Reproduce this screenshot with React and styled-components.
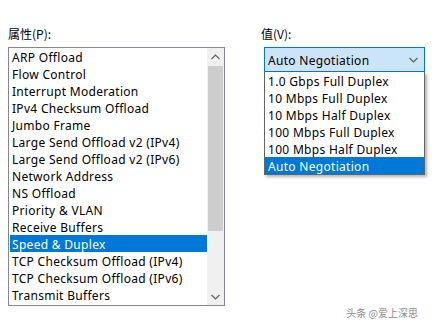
import React from 'react';
import styled, { createGlobalStyle } from 'styled-components';

const GlobalStyle = createGlobalStyle`
    html, body {
        margin: 0;
        padding: 0;
        background: #fff;
    }
    body {
        font-family: "Noto Sans", "Noto Sans CJK SC", sans-serif;
        font-size: 12px;
        letter-spacing: 0.3px;
        color: #000;
    }
`

const Page = styled.div`
    position: relative;
    width: 438px;
    height: 330px;
    display: flex;
    padding: 25px 0 0 8px;
    box-sizing: border-box;
`

const Column = styled.div`
    display: flex;
    flex-direction: column;
    width: ${p => p.width}px;
    margin-left: ${p => p.offset || 0}px;
`

const Label = styled.div`
    height: 17px;
    line-height: 17px;
    margin-bottom: 5px;
    margin-left: ${p => p.indent || 0}px;
    font-family: "Noto Sans CJK SC", sans-serif;
    letter-spacing: 0;
`

const ListBox = styled.div`
    display: flex;
    width: 217px;
    height: 259px;
    box-sizing: border-box;
    border: 1px solid #828790;
    background: #fff;
`

const Items = styled.ul`
    flex: 1;
    margin: 0;
    padding: 0 0 0 1px;
`

const Item = styled.li`
    list-style: none;
    height: 17px;
    line-height: 19px;
    overflow: hidden;
    padding-left: 2px;
    white-space: nowrap;
    background: ${p => (p.selected ? '#0078d7' : 'transparent')};
    color: ${p => (p.selected ? '#fff' : '#000')};
`

const ScrollBar = styled.div`
    width: 17px;
    display: flex;
    flex-direction: column;
    background: #f0f0f0;
`

const Arrow = styled.div`
    height: 17px;
    display: flex;
    align-items: center;
    justify-content: center;
`

const Track = styled.div`
    flex: 1;
    display: flex;
    flex-direction: column;
`

const Thumb = styled.div`
    height: 165px;
    margin: 1px 1px 0 1px;
    background: #cdcdcd;
`

const Combo = styled.div`
    width: 161px;
    height: 25px;
    box-sizing: border-box;
    border: 1px solid #0078d7;
    background: #cce4f7;
    display: flex;
    align-items: center;
    justify-content: space-between;
    padding: 1px 6px 0 3px;
`

const DropList = styled.ul`
    margin: 0;
    padding: 0;
    width: 161px;
    box-sizing: border-box;
    border: 1px solid #646464;
    border-top: none;
    background: #fff;
    box-shadow: 2px 2px 3px rgba(0, 0, 0, 0.3);
`

const DropItem = styled.li`
    list-style: none;
    height: 17px;
    line-height: 19px;
    overflow: hidden;
    padding-left: 3px;
    white-space: nowrap;
    background: ${p => (p.selected ? '#0078d7' : 'transparent')};
    color: ${p => (p.selected ? '#fff' : '#000')};
`

const Watermark = styled.div`
    position: absolute;
    right: 20px;
    bottom: 10px;
    font-family: "Noto Sans CJK SC", sans-serif;
    font-size: 10px;
    letter-spacing: 0;
    color: #8a8a8a;
    text-shadow: 0 0 2px #fff;
`

const Chevron = ({ up }) => (
    <svg width="9" height="6" viewBox="0 0 9 6">
        <path
            d={up ? 'M0.5 5 L4.5 1 L8.5 5' : 'M0.5 1 L4.5 5 L8.5 1'}
            fill="none"
            stroke="#606060"
            strokeWidth="1.2"
        />
    </svg>
);

const properties = [
    'ARP Offload',
    'Flow Control',
    'Interrupt Moderation',
    'IPv4 Checksum Offload',
    'Jumbo Frame',
    'Large Send Offload v2 (IPv4)',
    'Large Send Offload v2 (IPv6)',
    'Network Address',
    'NS Offload',
    'Priority & VLAN',
    'Receive Buffers',
    'Speed & Duplex',
    'TCP Checksum Offload (IPv4)',
    'TCP Checksum Offload (IPv6)',
    'Transmit Buffers',
];

const values = [
    '1.0 Gbps Full Duplex',
    '10 Mbps Full Duplex',
    '10 Mbps Half Duplex',
    '100 Mbps Full Duplex',
    '100 Mbps Half Duplex',
    'Auto Negotiation',
];

function App() {
    const selectedProp = 'Speed & Duplex';
    const selectedValue = 'Auto Negotiation';
    return (
        <Page>
            <GlobalStyle />
            <Column width={217}>
                <Label>属性(P):</Label>
                <ListBox>
                    <Items>
                        {properties.map(p => (
                            <Item key={p} selected={p === selectedProp}>{p}</Item>
                        ))}
                    </Items>
                    <ScrollBar>
                        <Arrow><Chevron up /></Arrow>
                        <Track><Thumb /></Track>
                        <Arrow><Chevron /></Arrow>
                    </ScrollBar>
                </ListBox>
            </Column>
            <Column width={161} offset={39}>
                <Label indent={-3}>值(V):</Label>
                <Combo>
                    <span>{selectedValue}</span>
                    <Chevron />
                </Combo>
                <DropList>
                    {values.map(v => (
                        <DropItem key={v} selected={v === selectedValue}>{v}</DropItem>
                    ))}
                </DropList>
            </Column>
            <Watermark>头条 @爱上深思</Watermark>
        </Page>
    );
}

export default App;
